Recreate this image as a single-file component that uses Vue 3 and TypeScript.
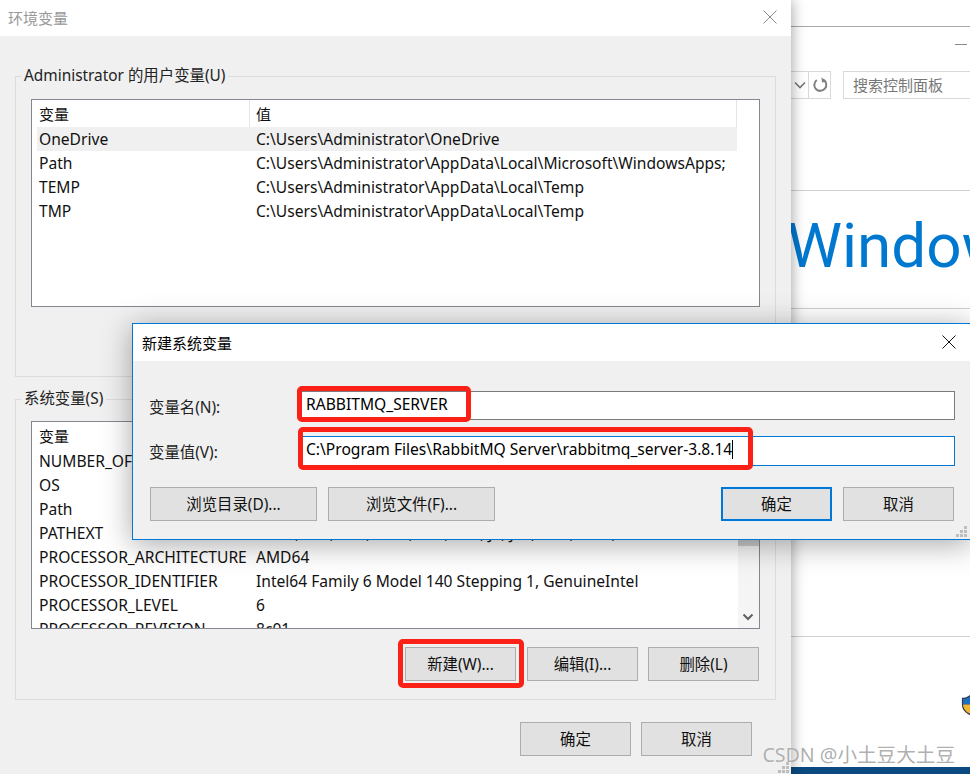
<script setup lang="ts">
interface EnvVar {
  name: string;
  value: string;
}

const userVars: EnvVar[] = [
  { name: "OneDrive", value: "C:\\Users\\Administrator\\OneDrive" },
  { name: "Path", value: "C:\\Users\\Administrator\\AppData\\Local\\Microsoft\\WindowsApps;" },
  { name: "TEMP", value: "C:\\Users\\Administrator\\AppData\\Local\\Temp" },
  { name: "TMP", value: "C:\\Users\\Administrator\\AppData\\Local\\Temp" },
];

const systemVars: EnvVar[] = [
  { name: "NUMBER_OF_PROCESSORS", value: "12" },
  { name: "OS", value: "Windows_NT" },
  { name: "Path", value: "C:\\Windows\\system32;C:\\Windows;C:\\Windows\\System32\\Wbem" },
  { name: "PATHEXT", value: ".COM;.EXE;.BAT;.CMD;.VBS;.VBE;.JS;.JSE;.WSF;.WSH;.MSC" },
  { name: "PROCESSOR_ARCHITECTURE", value: "AMD64" },
  { name: "PROCESSOR_IDENTIFIER", value: "Intel64 Family 6 Model 140 Stepping 1, GenuineIntel" },
  { name: "PROCESSOR_LEVEL", value: "6" },
  { name: "PROCESSOR_REVISION", value: "8c01" },
];

const gripDots = [
  [8, 0],
  [4, 4],
  [8, 4],
  [0, 8],
  [4, 8],
  [8, 8],
];
</script>

<template>
  <div class="stage">
    <!-- control panel behind -->
    <div class="panel">
      <div class="panel-top"></div>
      <div class="panel-head">
        <div class="panel-min"></div>
        <div class="address">
          <div class="addr-btn">
            <svg width="12" height="8" viewBox="0 0 12 8"><path d="M1 1.500 6 6.500 11 1.500" fill="none" stroke="#777" stroke-width="1.600" /></svg>
          </div>
          <div class="addr-btn refresh">
            <svg width="16" height="16" viewBox="0 0 16 16">
              <path d="M4.800 3A6 6 0 1 0 11.500 2.800" fill="none" stroke="#808080" stroke-width="2" />
              <path d="M9.500 0.500 10 5.500 15 4.500Z" fill="#808080" />
            </svg>
          </div>
          <div class="search">搜索控制面板</div>
        </div>
      </div>
      <div class="panel-banner">Windows</div>
      <div class="panel-mid"></div>
      <div class="panel-low">
        <svg class="shield" width="18" height="20" viewBox="0 0 18 21">
          <path d="M9 0C6.500 2 3.500 3 0.500 3V10C0.500 15 4 19 9 21C14 19 17.500 15 17.500 10V3C14.500 3 11.500 2 9 0Z" fill="#2f3a4a" />
          <path d="M9 1.500C7 3 4 4 1.700 4.200V10H9Z" fill="#1f6fc0" />
          <path d="M9 10V19.500C5 18 1.700 14.500 1.700 10Z" fill="#f2b632" />
          <path d="M9 1.500C11 3 14 4 16.300 4.200V10H9Z" fill="#f2b632" />
          <path d="M9 10V19.500C13 18 16.300 14.500 16.300 10Z" fill="#1f6fc0" />
        </svg>
      </div>
      <div class="taskbar"></div>
    </div>

    <!-- environment variables window -->
    <div class="env-window">
      <div class="title-bar">
        <span class="title-muted">环境变量</span>
        <svg class="close" width="14" height="14" viewBox="0 0 14 14"><path d="M0.500 0.500 13.500 13.500M13.500 0.500 0.500 13.500" stroke="#8a8a8a" stroke-width="1" /></svg>
      </div>
      <div class="env-body">
        <fieldset class="group">
          <legend>Administrator 的用户变量(U)</legend>
          <div class="list">
            <div class="row head">
              <span class="cell">变量</span>
              <span class="cell">值</span>
            </div>
            <div v-for="(item, i) in userVars" :key="item.name" class="row" :class="{ selected: i === 0 }">
              <span class="cell">{{ item.name }}</span>
              <span class="cell">{{ item.value }}</span>
            </div>
          </div>
        </fieldset>

        <fieldset class="group second">
          <legend>系统变量(S)</legend>
          <div class="list">
            <div class="row head">
              <span class="cell">变量</span>
              <span class="cell">值</span>
            </div>
            <div v-for="item in systemVars" :key="item.name" class="row">
              <span class="cell">{{ item.name }}</span>
              <span class="cell">{{ item.value }}</span>
            </div>
            <div class="scrollbar">
              <div class="thumb"></div>
              <svg class="down" width="12" height="8" viewBox="0 0 12 8"><path d="M1.500 1.500 6 6 10.500 1.500" fill="none" stroke="#606060" stroke-width="2" /></svg>
            </div>
          </div>
          <div class="group-actions">
            <button class="btn new-btn">新建(W)...</button>
            <button class="btn">编辑(I)...</button>
            <button class="btn">删除(L)</button>
          </div>
        </fieldset>

        <div class="env-actions">
          <button class="btn">确定</button>
          <button class="btn">取消</button>
        </div>
      </div>
      <svg class="grip env-grip" width="11" height="11" viewBox="0 0 11 11">
        <rect v-for="d in gripDots" :key="d.join()" :x="d[0]" :y="d[1]" width="3" height="3" fill="#bdbdbd" />
      </svg>
    </div>

    <!-- new system variable dialog -->
    <div class="dialog">
      <div class="title-bar dialog-title">
        <span>新建系统变量</span>
        <svg class="close" width="14" height="14" viewBox="0 0 14 14"><path d="M0.500 0.500 13.500 13.500M13.500 0.500 0.500 13.500" stroke="#111" stroke-width="1" /></svg>
      </div>
      <div class="dialog-body">
        <div class="field">
          <label>变量名(N):</label>
          <div class="input">RABBITMQ_SERVER</div>
        </div>
        <div class="field value-field">
          <label>变量值(V):</label>
          <div class="input focused">C:\Program Files\RabbitMQ Server\rabbitmq_server-3.8.14<i class="caret"></i></div>
        </div>
        <div class="dialog-actions">
          <button class="btn wide">浏览目录(D)...</button>
          <button class="btn wide">浏览文件(F)...</button>
          <span class="spacer"></span>
          <button class="btn primary">确定</button>
          <button class="btn">取消</button>
        </div>
      </div>
      <svg class="grip dialog-grip" width="11" height="11" viewBox="0 0 11 11">
        <rect v-for="d in gripDots" :key="d.join()" :x="d[0]" :y="d[1]" width="3" height="3" fill="#bdbdbd" />
      </svg>
    </div>

    <!-- red annotations -->
    <div class="mark mark-name"></div>
    <div class="mark mark-value"></div>
    <div class="mark mark-new"></div>

    <div class="watermark">CSDN @小土豆大土豆</div>
  </div>
</template>

<style scoped>
.stage {
  position: relative;
  width: 970px;
  height: 774px;
  overflow: hidden;
  background: #fff;
  color: #000;
  font-family: "Noto Sans", "Noto Sans CJK SC", sans-serif;
  font-size: 15px;
}

/* control panel */
.panel {
  position: absolute;
  left: 791px;
  top: 0;
  width: 179px;
  height: 774px;
  display: flex;
  flex-direction: column;
  overflow: hidden;
}

.panel-top {
  height: 27px;
  flex: none;
  background: #fff;
  border-bottom: 1px solid #a8a8a8;
  box-sizing: border-box;
}

.panel-head {
  height: 164px;
  flex: none;
  border-bottom: 1px solid #d0d0d0;
  box-sizing: border-box;
  position: relative;
}

.panel-min {
  position: absolute;
  left: 164px;
  top: 17px;
  width: 12px;
  height: 1px;
  background: #8a8a8a;
}

.address {
  display: flex;
  margin-top: 44px;
  height: 28px;
}

.addr-btn {
  width: 18px;
  height: 28px;
  flex: none;
  box-sizing: border-box;
  border: 1px solid #d9d9d9;
  border-left: none;
  display: flex;
  align-items: center;
  justify-content: center;
}

.refresh {
  width: 22px;
}

.search {
  margin-left: 12px;
  width: 140px;
  flex: none;
  height: 28px;
  line-height: 26px;
  box-sizing: border-box;
  border: 1px solid #d9d9d9;
  border-right: none;
  padding-left: 9px;
  color: #777;
  white-space: nowrap;
}

.panel-banner {
  height: 118px;
  flex: none;
  box-sizing: border-box;
  border-bottom: 1px solid #d0d0d0;
  font-family: Roboto, sans-serif;
  font-weight: 400;
  font-size: 62px;
  line-height: 110px;
  color: #0078d0;
  margin-left: -4px;
  white-space: nowrap;
}

.panel-mid {
  height: 328px;
  flex: none;
  box-sizing: border-box;
  border-bottom: 1px solid #d0d0d0;
}

.panel-low {
  height: 130px;
  flex: none;
  position: relative;
}

.shield {
  position: absolute;
  left: 170px;
  top: 58px;
}

.taskbar {
  flex: 1;
  background: #0a4a80;
}

/* windows */
.env-window {
  position: absolute;
  left: 0;
  top: 0;
  width: 791px;
  height: 774px;
  background: #f0f0f0;
  box-shadow: 0 0 14px rgba(0, 0, 0, 0.4);
  display: flex;
  flex-direction: column;
}

.title-bar {
  height: 36px;
  flex: none;
  background: #fff;
  display: flex;
  align-items: center;
  justify-content: space-between;
  padding: 0 14px 2px 8px;
  box-sizing: border-box;
}

.title-muted {
  color: #999;
}

.close {
  flex: none;
}

.env-body {
  padding: 29px 15px 0;
}

.group {
  margin: 0;
  min-width: 0;
  height: 312px;
  box-sizing: border-box;
  border: 1px solid #dcdcdc;
  padding: 12px 15px 0;
}

.group legend {
  margin-left: -10px;
  padding: 0 3px;
  height: 22px;
  line-height: 22px;
  font-size: 15.4px;
  color: #222;
}

.second {
  height: 312px;
  margin-top: 11px;
  padding-top: 11px;
}

.list {
  position: relative;
  height: 208px;
  box-sizing: border-box;
  border: 1px solid #828790;
  background: #fff;
  padding-left: 5px;
  overflow: hidden;
}

.row {
  display: grid;
  grid-template-columns: 217px 1fr;
  width: 700px;
  height: 24px;
  line-height: 24px;
  font-size: 15.6px;
  white-space: nowrap;
  color: #111;
}

.cell {
  padding-left: 2px;
  overflow: hidden;
}

.head {
  height: 27px;
  line-height: 28px;
  font-size: 15px;
}

.head .cell:first-child {
  margin-right: 4px;
  border-right: 1px solid #e5e5e5;
}

.head .cell:last-child {
  border-right: 1px solid #e5e5e5;
}

.selected {
  background: #f0f0f0;
}

.scrollbar {
  position: absolute;
  right: 0;
  top: 0;
  bottom: 0;
  width: 21px;
  background: #f5f5f5;
}

.thumb {
  margin-top: 98px;
  height: 26px;
  background: #cdcdcd;
}

.down {
  position: absolute;
  left: 4px;
  bottom: 7px;
}

.group-actions {
  display: flex;
  justify-content: flex-end;
  gap: 10px;
  margin: 18px 1px 0 0;
}

.new-btn {
  margin-right: 1px;
}

.env-actions {
  display: flex;
  justify-content: flex-end;
  gap: 10px;
  margin: 22px 24px 0 0;
}

.btn {
  width: 111px;
  height: 34px;
  padding: 0 0 2px;
  box-sizing: border-box;
  background: #e1e1e1;
  border: 1px solid #adadad;
  border-radius: 0;
  color: #111;
  font: inherit;
  font-size: 15.4px;
}

.wide {
  width: 167px;
}

.primary {
  border: 2px solid #0078d7;
}

.grip {
  position: absolute;
}

.env-grip {
  left: 778px;
  top: 762px;
}

.dialog {
  position: absolute;
  left: 132px;
  top: 323px;
  width: 840px;
  height: 217px;
  box-sizing: border-box;
  border: 1px solid #0078d7;
  background: #f0f0f0;
  box-shadow: 0 4px 28px rgba(0, 0, 0, 0.35);
  display: flex;
  flex-direction: column;
}

.dialog-title {
  height: 37px;
  padding: 0 15px 1px 9px;
}

.dialog-body {
  padding: 30px 16px 0;
}

.field {
  display: flex;
  align-items: center;
  height: 29px;
  color: #222;
}

.field label {
  width: 150px;
  flex: none;
  padding-top: 1px;
  font-size: 15.4px;
}

.value-field {
  height: 30px;
  margin-top: 16px;
}

.input {
  flex: 1;
  height: 100%;
  box-sizing: border-box;
  border: 1px solid #7a7a7a;
  background: #fff;
  padding-left: 6px;
  font-size: 15.6px;
  line-height: 25px;
  color: #000;
  white-space: nowrap;
}

.focused {
  border-color: #0078d7;
}

.caret {
  display: inline-block;
  width: 1px;
  height: 19px;
  background: #000;
  vertical-align: -4px;
}

.dialog-actions {
  display: flex;
  gap: 11px;
  margin-top: 21px;
  padding: 0 1px;
}

.spacer {
  flex: 1;
}

.dialog-grip {
  left: 823px;
  top: 202px;
}

/* annotations */
.mark {
  position: absolute;
  box-sizing: border-box;
  border: 5px solid #fb2116;
  border-radius: 5px;
}

.mark-name {
  left: 297px;
  top: 386px;
  width: 174px;
  height: 36px;
}

.mark-value {
  left: 298px;
  top: 427px;
  width: 455px;
  height: 43px;
}

.mark-new {
  left: 398px;
  top: 639px;
  width: 126px;
  height: 49px;
}

.watermark {
  position: absolute;
  right: 15px;
  top: 741px;
  font-size: 19.600px;
  line-height: 28px;
  white-space: nowrap;
  color: rgba(130, 130, 130, 0.65);
  text-shadow: 0 0 1px #fff;
}
</style>
